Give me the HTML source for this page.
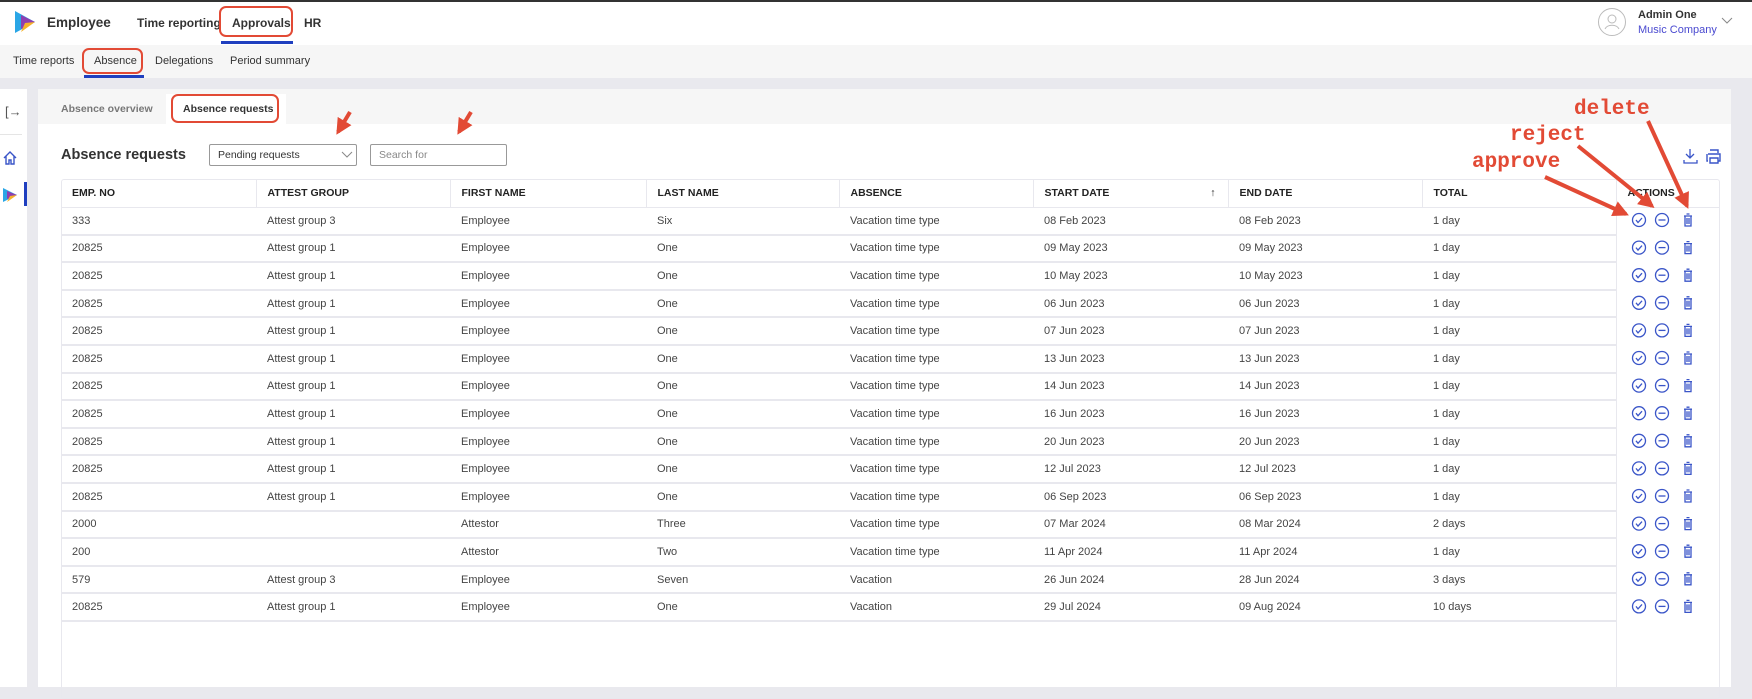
<!DOCTYPE html><html><head><meta charset="utf-8"><style>
*{box-sizing:border-box;margin:0;padding:0}
body{width:1752px;height:687px;overflow:hidden;background:#e9e9ee;font-family:"Liberation Sans",sans-serif;color:#333;position:relative}
.abs{position:absolute}
.top{left:0;top:0;width:1752px;height:45px;background:#fff;border-top:2px solid #333}
.sub{left:0;top:45px;width:1752px;height:33px;background:#f6f6f6}
.t{position:absolute;white-space:nowrap}
.side{left:0;top:89px;width:27px;height:598px;background:#fff}
.card{left:38px;top:89px;width:1693px;height:598px;background:#fff}
.tabs{left:38px;top:89px;width:1693px;height:35px;background:#f6f6f6}
table{position:absolute;left:61px;top:179px;width:1659px;border-collapse:collapse;font-size:11px}
th{height:28px;text-align:left;font-weight:bold;font-size:10.5px;padding-left:11px;border-right:1px solid #e8e8ee;border-bottom:1px solid #e8e8ee;color:#222}
td{height:27.6px;padding-left:11px;border-bottom:2px solid #e8e8ee;color:#444}
td.a{border-left:1px solid #e8e8ee;border-bottom:none}
.tbox{position:absolute;left:61px;top:179px;width:1659px;height:520px;border:1px solid #e8e8ee;border-radius:3px}
.ann{font-family:"Liberation Mono",monospace;font-weight:bold;font-size:21px;color:#e24a35}
.rr{position:absolute;border:2.5px solid #e24a35;border-radius:7px}
</style></head><body>
<div class="abs top"></div>
<svg class="abs" style="left:13px;top:10px" width="24" height="24" viewBox="0 0 24 24"><polygon points="2,1 22,12 2,23" fill="#2aa6e6"/><polygon points="8,5 22,12 8,19" fill="#8e3fb0"/><polygon points="12,13 22,12 8,22" fill="#f6b32a"/></svg>
<div class="t" style="left:47px;top:15px;font-size:13.5px;font-weight:bold">Employee</div>
<div class="t" style="left:137px;top:16px;font-size:12px;font-weight:bold">Time reporting</div>
<div class="t" style="left:232px;top:16px;font-size:12px;font-weight:bold">Approvals</div>
<div class="t" style="left:304px;top:16px;font-size:12px;font-weight:bold">HR</div>
<div class="abs" style="left:221px;top:41px;width:72px;height:3px;background:#1f3fbf"></div>
<div class="rr" style="left:219px;top:6px;width:74px;height:31px"></div>
<svg class="abs" style="left:1597px;top:7px" width="30" height="30"><circle cx="15" cy="15" r="13.5" fill="none" stroke="#bbb"/><circle cx="15" cy="12" r="4" fill="none" stroke="#bbb"/><path d="M8 22c2-5 12-5 14 0" fill="none" stroke="#bbb"/></svg>
<div class="t" style="left:1638px;top:9px;font-size:11px;font-weight:bold">Admin One</div>
<div class="t" style="left:1638px;top:24px;font-size:11px;color:#4a4ad0">Music Company</div>
<svg class="abs" style="left:1721px;top:17px" width="12" height="8"><path d="M1 1l5 5 5-5" fill="none" stroke="#888"/></svg>
<div class="abs sub"></div>
<div class="t" style="left:13px;top:55px;font-size:11px">Time reports</div>
<div class="t" style="left:94px;top:55px;font-size:11px">Absence</div>
<div class="t" style="left:155px;top:55px;font-size:11px">Delegations</div>
<div class="t" style="left:230px;top:55px;font-size:11px">Period summary</div>
<div class="abs" style="left:84px;top:75px;width:60px;height:3px;background:#1f3fbf"></div>
<div class="rr" style="left:82px;top:48px;width:61px;height:26px"></div>
<div class="abs side"></div>
<div class="t" style="left:5px;top:104px;font-size:13px;color:#555">[&#8594;</div>
<div class="abs" style="left:0;top:134px;width:22px;height:1px;background:#e5e5e5"></div>
<svg class="abs" style="left:2px;top:150px" width="16" height="16"><path d="M2 8l6-6 6 6M4 6v8h3v-4h2v4h3V6" fill="none" stroke="#3a55c8" stroke-width="1.4"/></svg>
<svg class="abs" style="left:2px;top:187px" width="16" height="16"><polygon points="1,1 15,8 1,15" fill="#2aa6e6"/><polygon points="5,4 15,8 5,12" fill="#8e3fb0"/><polygon points="8,9 15,8 5,15" fill="#f6b32a"/></svg>
<div class="abs" style="left:24px;top:182px;width:3px;height:24px;background:#1f3fbf"></div>
<div class="abs card"></div>
<div class="abs tabs"></div>
<div class="abs" style="left:166px;top:94px;width:120px;height:30px;background:#fff"></div>
<div class="t" style="left:61px;top:103px;font-size:10.5px;font-weight:bold;color:#777">Absence overview</div>
<div class="t" style="left:183px;top:103px;font-size:10.5px;font-weight:bold">Absence requests</div>
<div class="rr" style="left:171px;top:94px;width:108px;height:29px"></div>
<div class="t" style="left:61px;top:147px;font-size:14.5px;font-weight:bold">Absence requests</div>
<div class="abs" style="left:209px;top:144px;width:148px;height:22px;border:1px solid #999;border-radius:2px"></div>
<div class="t" style="left:218px;top:149px;font-size:10.5px">Pending requests</div>
<svg class="abs" style="left:341px;top:151px" width="12" height="8"><path d="M1 1l5 5 5-5" fill="none" stroke="#888"/></svg>
<div class="abs" style="left:370px;top:144px;width:137px;height:22px;border:1px solid #999;border-radius:2px"></div>
<div class="t" style="left:379px;top:149px;font-size:10.5px;color:#888">Search for</div>
<svg class="abs" style="left:1682px;top:147px" width="40" height="18"><path d="M8 2v9M4 7l4 4 4-4M2 13v3h13v-3" fill="none" stroke="#3a55c8" stroke-width="1.3"/><path d="M28 3h8v3M26 7h12v7h-2M26 14h-1V7M28 11h8v5h-8z" fill="none" stroke="#3a55c8" stroke-width="1.4"/></svg>
<div class="tbox"></div>
<table>
<tr><th style="width:195px">EMP. NO</th><th style="width:194px">ATTEST GROUP</th><th style="width:196px">FIRST NAME</th><th style="width:193px">LAST NAME</th><th style="width:194px">ABSENCE</th><th style="width:195px">START DATE<span style="float:right;margin-right:12px">&#8593;</span></th><th style="width:194px">END DATE</th><th style="width:194px">TOTAL</th><th style="border-right:none">ACTIONS</th></tr>
<tr><td>333</td><td>Attest group 3</td><td>Employee</td><td>Six</td><td>Vacation time type</td><td>08 Feb 2023</td><td>08 Feb 2023</td><td>1 day</td><td class="a"></td></tr>
<tr><td>20825</td><td>Attest group 1</td><td>Employee</td><td>One</td><td>Vacation time type</td><td>09 May 2023</td><td>09 May 2023</td><td>1 day</td><td class="a"></td></tr>
<tr><td>20825</td><td>Attest group 1</td><td>Employee</td><td>One</td><td>Vacation time type</td><td>10 May 2023</td><td>10 May 2023</td><td>1 day</td><td class="a"></td></tr>
<tr><td>20825</td><td>Attest group 1</td><td>Employee</td><td>One</td><td>Vacation time type</td><td>06 Jun 2023</td><td>06 Jun 2023</td><td>1 day</td><td class="a"></td></tr>
<tr><td>20825</td><td>Attest group 1</td><td>Employee</td><td>One</td><td>Vacation time type</td><td>07 Jun 2023</td><td>07 Jun 2023</td><td>1 day</td><td class="a"></td></tr>
<tr><td>20825</td><td>Attest group 1</td><td>Employee</td><td>One</td><td>Vacation time type</td><td>13 Jun 2023</td><td>13 Jun 2023</td><td>1 day</td><td class="a"></td></tr>
<tr><td>20825</td><td>Attest group 1</td><td>Employee</td><td>One</td><td>Vacation time type</td><td>14 Jun 2023</td><td>14 Jun 2023</td><td>1 day</td><td class="a"></td></tr>
<tr><td>20825</td><td>Attest group 1</td><td>Employee</td><td>One</td><td>Vacation time type</td><td>16 Jun 2023</td><td>16 Jun 2023</td><td>1 day</td><td class="a"></td></tr>
<tr><td>20825</td><td>Attest group 1</td><td>Employee</td><td>One</td><td>Vacation time type</td><td>20 Jun 2023</td><td>20 Jun 2023</td><td>1 day</td><td class="a"></td></tr>
<tr><td>20825</td><td>Attest group 1</td><td>Employee</td><td>One</td><td>Vacation time type</td><td>12 Jul 2023</td><td>12 Jul 2023</td><td>1 day</td><td class="a"></td></tr>
<tr><td>20825</td><td>Attest group 1</td><td>Employee</td><td>One</td><td>Vacation time type</td><td>06 Sep 2023</td><td>06 Sep 2023</td><td>1 day</td><td class="a"></td></tr>
<tr><td>2000</td><td></td><td>Attestor</td><td>Three</td><td>Vacation time type</td><td>07 Mar 2024</td><td>08 Mar 2024</td><td>2 days</td><td class="a"></td></tr>
<tr><td>200</td><td></td><td>Attestor</td><td>Two</td><td>Vacation time type</td><td>11 Apr 2024</td><td>11 Apr 2024</td><td>1 day</td><td class="a"></td></tr>
<tr><td>579</td><td>Attest group 3</td><td>Employee</td><td>Seven</td><td>Vacation</td><td>26 Jun 2024</td><td>28 Jun 2024</td><td>3 days</td><td class="a"></td></tr>
<tr><td>20825</td><td>Attest group 1</td><td>Employee</td><td>One</td><td>Vacation</td><td>29 Jul 2024</td><td>09 Aug 2024</td><td>10 days</td><td class="a"></td></tr>
</table>
<div class="abs" style="left:1616px;top:207px;width:1px;height:480px;background:#e8e8ee"></div>
<svg class="abs" style="left:0;top:0" width="1752" height="687">
<defs><g id="ic" fill="none" stroke="#3a55c8" stroke-width="1.3"><circle cx="0" cy="0" r="6.5"/><path d="M-3 0l2 2.5 4-4.5"/><circle cx="23" cy="0" r="6.5"/><path d="M19.5 0h7"/><path d="M45 -4h8M47.5 -6h3M46 -4v10h6v-10M48 -2v6M50 -2v6"/></g>
<marker id="ar" viewBox="0 0 10 10" refX="8" refY="5" markerWidth="4" markerHeight="4" orient="auto"><path d="M0 0L10 5L0 10z" fill="#e24a35"/></marker></defs>
<g transform="translate(1639,220)"><use href="#ic"/><use href="#ic" y="27.6"/><use href="#ic" y="55.2"/><use href="#ic" y="82.8"/><use href="#ic" y="110.4"/><use href="#ic" y="138"/><use href="#ic" y="165.6"/><use href="#ic" y="193.2"/><use href="#ic" y="220.8"/><use href="#ic" y="248.4"/><use href="#ic" y="276"/><use href="#ic" y="303.6"/><use href="#ic" y="331.2"/><use href="#ic" y="358.8"/><use href="#ic" y="386.4"/></g>
<g stroke="#e24a35" stroke-width="4" marker-end="url(#ar)"><line x1="1545" y1="177" x2="1626" y2="214"/><line x1="1578" y1="146" x2="1652" y2="206"/><line x1="1648" y1="121" x2="1687" y2="206"/><line x1="350" y1="112" x2="338" y2="132"/><line x1="471" y1="112" x2="459" y2="132"/></g>
</svg>
<div class="t ann" style="left:1574px;top:98px">delete</div>
<div class="t ann" style="left:1510px;top:124px">reject</div>
<div class="t ann" style="left:1472px;top:151px">approve</div>
</body></html>
